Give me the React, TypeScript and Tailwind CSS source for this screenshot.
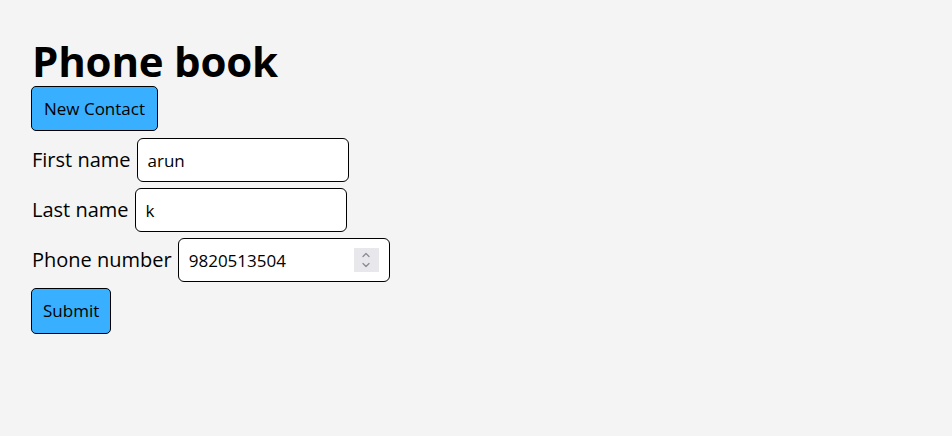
import { ChevronUp, ChevronDown } from 'lucide-react';

const fields = [
  { label: 'First name', value: 'arun', spin: false },
  { label: 'Last name', value: 'k', spin: false },
  { label: 'Phone number', value: '9820513504', spin: true },
];

export default function App() {
  return (
    <div className="min-h-[436px] bg-[#f4f4f4] px-8 pt-[35px] text-black font-['Open_Sans',sans-serif]">
      <h1 className="text-[42px] font-bold leading-[51px] tracking-[-0.2px]">Phone book</h1>

      <button className="h-[45px] -ml-px rounded-[5px] border border-black bg-[#38b0ff] px-[12px] text-[17px]">
        New Contact
      </button>

      <form className="mt-[7px] flex flex-col gap-[6px]" onSubmit={(e) => e.preventDefault()}>
        {fields.map((f) => (
          <div key={f.label} className="flex items-center gap-[6px]">
            <label className="text-[20px]">{f.label}</label>
            <div className="relative">
              <input
                defaultValue={f.value}
                className="h-[44px] w-[212px] rounded-[6px] border border-black bg-white px-[10px] text-[17px] outline-none"
              />
              {f.spin && (
                <span className="absolute right-[11px] top-[10px] flex h-[24px] w-[25px] flex-col items-center justify-center bg-[#e8e8ec] text-[#8a8a94]">
                  <ChevronUp className="-mb-[2px] h-[12px] w-[12px]" strokeWidth={2.5} />
                  <ChevronDown className="h-[12px] w-[12px]" strokeWidth={2.5} />
                </span>
              )}
            </div>
          </div>
        ))}
        <div>
          <button
            type="submit"
            className="h-[46px] -ml-px rounded-[5px] border border-black bg-[#38b0ff] px-[11px] text-[17px]"
          >
            Submit
          </button>
        </div>
      </form>
    </div>
  );
}
